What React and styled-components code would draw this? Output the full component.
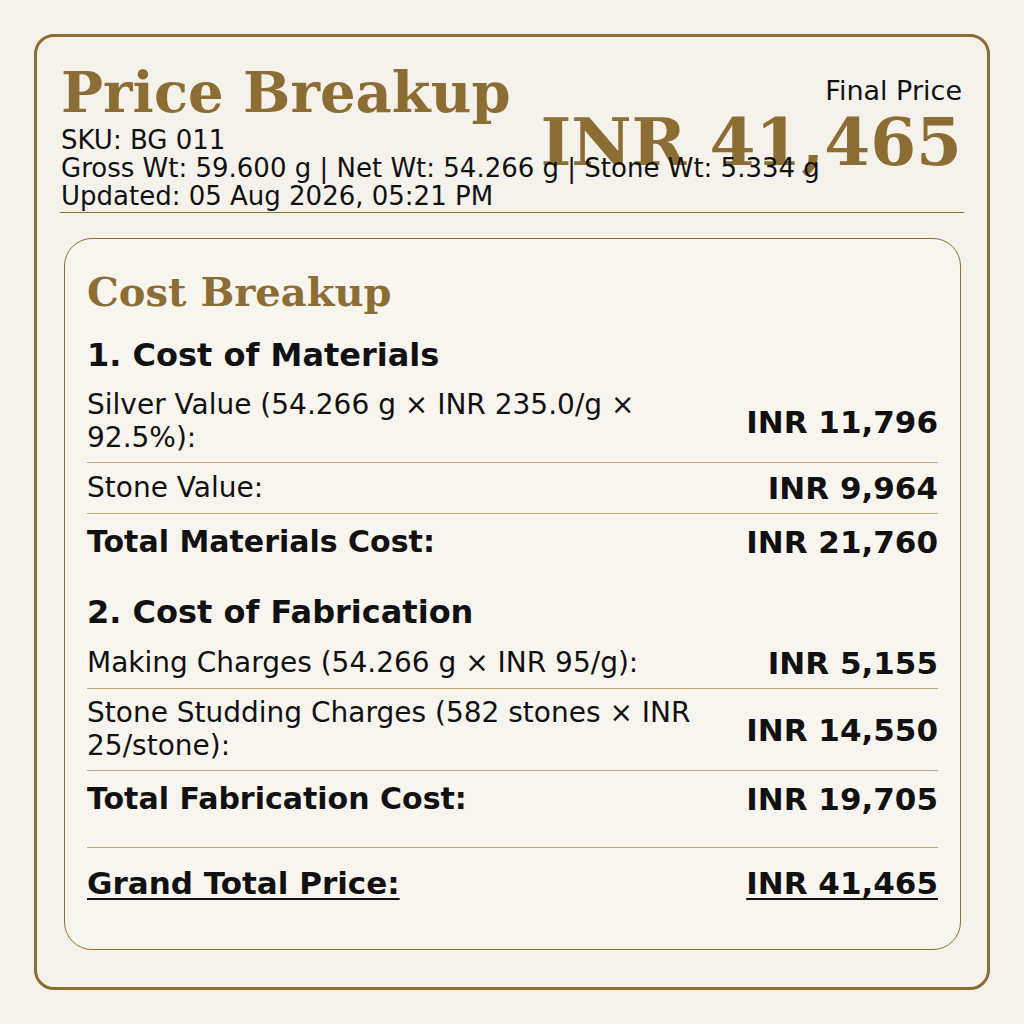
import React from "react";
import styled, { createGlobalStyle } from "styled-components";

const gold = "#8c6e35";
const rule = "#c2aa74";
const ink = "#111111";

const GlobalStyle = createGlobalStyle`
  body {
    margin: 0;
    background: #f5f2eb;
    font-family: "DejaVu Sans", "Liberation Sans", sans-serif;
    color: ${ink};
  }
`;

const materials = [
  { label: "Silver Value (54.266 g × INR 235.0/g × 92.5%):", value: "INR 11,796" },
  { label: "Stone Value:", value: "INR 9,964" },
];

const fabrication = [
  { label: "Making Charges (54.266 g × INR 95/g):", value: "INR 5,155" },
  { label: "Stone Studding Charges (582 stones × INR 25/stone):", value: "INR 14,550" },
];

export default function App() {
  return (
    <>
      <GlobalStyle />
      <Page>
        <Sheet>
          <Header>
            <PriceBlock>
              <PriceLabel>Final Price</PriceLabel>
              <BigPrice>INR 41,465</BigPrice>
            </PriceBlock>
            <Info>
              <Title>Price Breakup</Title>
              <Meta>SKU: BG 011</Meta>
              <Meta>Gross Wt: 59.600 g | Net Wt: 54.266 g | Stone Wt: 5.334 g</Meta>
              <Meta>Updated: 05 Aug 2026, 05:21 PM</Meta>
            </Info>
          </Header>

          <Card>
            <CardTitle>Cost Breakup</CardTitle>

            <Section>
              <SectionHeading>1. Cost of Materials</SectionHeading>
              {materials.map((m) => (
                <Row key={m.label}>
                  <Label>{m.label}</Label>
                  <Value>{m.value}</Value>
                </Row>
              ))}
              <Row $total>
                <Label $bold>Total Materials Cost:</Label>
                <Value>INR 21,760</Value>
              </Row>
            </Section>

            <Section $gap="23px">
              <SectionHeading>2. Cost of Fabrication</SectionHeading>
              {fabrication.map((m) => (
                <Row key={m.label}>
                  <Label>{m.label}</Label>
                  <Value>{m.value}</Value>
                </Row>
              ))}
              <Row $total>
                <Label $bold>Total Fabrication Cost:</Label>
                <Value>INR 19,705</Value>
              </Row>
            </Section>

            <GrandRow>
              <GrandText>Grand Total Price:</GrandText>
              <GrandText>INR 41,465</GrandText>
            </GrandRow>
          </Card>
        </Sheet>
      </Page>
    </>
  );
}

const Page = styled.div`
  padding: 34px;
`;

const Sheet = styled.div`
  box-sizing: border-box;
  width: 956px;
  height: 956px;
  border: 3px solid ${gold};
  border-radius: 20px;
  padding: 22px 23px;
`;

const Header = styled.header`
  position: relative;
  padding-bottom: 2px;
  border-bottom: 1.5px solid ${gold};
`;

const Info = styled.div`
  position: relative;
  z-index: 1;
  padding-left: 1px;
`;

const Title = styled.h1`
  margin: 0;
  font-family: "DejaVu Serif", "Liberation Serif", serif;
  font-weight: bold;
  font-size: 56px;
  line-height: 67px;
  color: ${gold};
`;

const Meta = styled.div`
  font-size: 26px;
  line-height: 28px;
  white-space: nowrap;
`;

const PriceBlock = styled.div`
  position: absolute;
  top: 16px;
  right: 2px;
  text-align: right;
`;

const PriceLabel = styled.div`
  font-size: 27px;
  line-height: 1.2;
`;

const BigPrice = styled.div`
  margin-top: 2px;
  font-family: "DejaVu Serif", "Liberation Serif", serif;
  font-weight: bold;
  font-size: 66px;
  line-height: 1;
  color: ${gold};
  white-space: nowrap;
`;

const Card = styled.div`
  margin: 25px 3px 0 4px;
  padding: 29px 22px 31px 22px;
  border: 1.5px solid ${gold};
  border-radius: 28px;
  background: #f8f5ef;
`;

const CardTitle = styled.h2`
  margin: 0;
  font-family: "DejaVu Serif", "Liberation Serif", serif;
  font-weight: bold;
  font-size: 40px;
  line-height: 1.2;
  color: ${gold};
`;

const Section = styled.section`
  margin-top: ${(p) => p.$gap || "20px"};
`;

const SectionHeading = styled.h3`
  margin: 0 0 7px;
  font-size: 32px;
  font-weight: bold;
  line-height: 1.2;
`;

const Row = styled.div`
  display: flex;
  align-items: center;
  justify-content: space-between;
  gap: 24px;
  padding: ${(p) => (p.$total ? "11px 0" : "8px 0")};
  border-bottom: ${(p) => (p.$total ? "none" : `1px solid ${rule}`)};
`;

const Label = styled.div`
  flex: 1;
  font-size: ${(p) => (p.$bold ? "30px" : "28px")};
  font-weight: ${(p) => (p.$bold ? "bold" : "normal")};
  line-height: ${(p) => (p.$bold ? 1.1 : 1.15)};
`;

const Value = styled.div`
  flex-shrink: 0;
  font-size: 31px;
  font-weight: bold;
  line-height: 1.1;
  white-space: nowrap;
`;

const GrandRow = styled.div`
  display: flex;
  justify-content: space-between;
  margin-top: 20px;
  padding: 18px 0 18px;
  border-top: 1px solid ${rule};
`;

const GrandText = styled.div`
  font-size: 31px;
  font-weight: bold;
  line-height: 1.1;
  text-decoration: underline;
  text-decoration-thickness: 2px;
  text-underline-offset: 4px;
`;
